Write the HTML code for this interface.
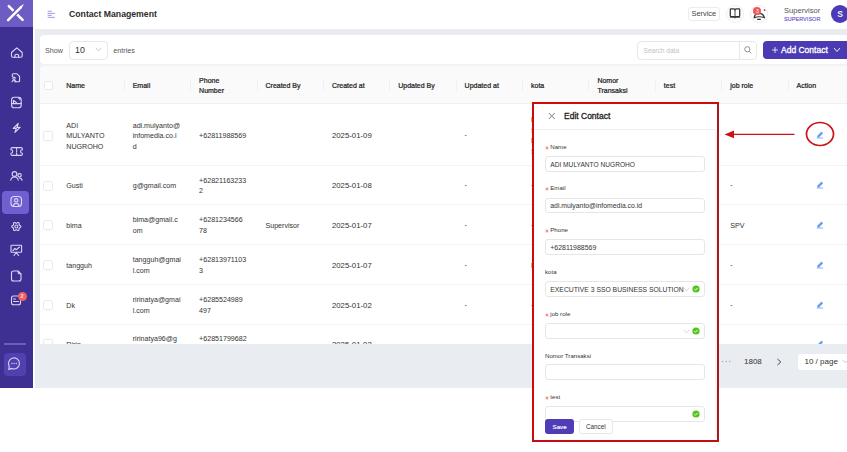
<!DOCTYPE html>
<html><head><meta charset="utf-8">
<style>
*{margin:0;padding:0;box-sizing:border-box}
html,body{width:847px;height:452px;overflow:hidden;background:#fff;font-family:"Liberation Sans",sans-serif;color:#333}
.a{position:absolute}
#side{left:0;top:0;width:33px;height:388px;background:#3e2f93}
#logo{left:0;top:0;width:33px;height:27px;background:#6c5cc4}
#hdr{left:33px;top:0;width:814px;height:29px;background:#fff}
#main{left:34.5px;top:29px;width:812.5px;height:358.6px;background:#e9ecf1}
#showcard{left:40px;top:35px;width:820px;height:29px;background:#fff;border-radius:4px}
#tcard{left:40px;top:66px;width:820px;height:278px;background:#fff;border-radius:4px 4px 0 0;overflow:hidden}
#thead{left:0;top:0;width:820px;height:38px;background:#fafafa;border-bottom:1px solid #f0f0f0}
.th{position:absolute;font-size:7px;color:#222;-webkit-text-stroke:0.22px #222;line-height:10.2px;white-space:nowrap}
.td{position:absolute;font-size:7.1px;color:#333;line-height:10.5px;white-space:nowrap}
.dt{font-size:7.8px}
.sep{position:absolute;top:13.5px;width:1px;height:11px;background:#f0f0f0}
.rowline{position:absolute;left:0;width:820px;height:1px;background:#f3f3f3}
.cb{position:absolute;width:9px;height:9px;border:1px solid #e9e9e9;border-radius:2px;background:#fff}
.edit{position:absolute;width:8px;height:8px}
</style></head><body>
<div class="a" id="side"></div>

<svg class="a" style="left:0;top:0" width="33" height="388" viewBox="0 0 33 388" fill="none" stroke="#dcd5f6" stroke-width="1.1" stroke-linecap="round" stroke-linejoin="round">
 <!-- home -->
 <path d="M11.5 52.5 L16.8 47.8 L22.2 52.5 V56 Q22.2 57.2 21 57.2 H12.7 Q11.5 57.2 11.5 56 Z"/>
 <path d="M15 57.2 V55 Q16.8 53.4 18.6 55 V57.2"/>
 <!-- doc -->
 <path d="M14.5 81.8 H18.6 Q19.6 81.8 19.6 80.8 V76.3 L17 73.8 H13.2 Q12.3 73.8 12.3 74.8 V76.5"/>
 <circle cx="14" cy="78.3" r="1.2"/>
 <path d="M12 81.8 Q12.3 80.2 14 80.2 Q15.7 80.2 16 81.8"/>
 <!-- doc2 -->
 <rect x="11.6" y="97.3" width="9.6" height="10.5" rx="2.6"/>
 <path d="M11.8 103.6 H21"/>
 <path d="M13.5 103.4 V100.5 L15.5 101.8 L17 103.4"/>
 <path d="M18.6 98 L20 99.4"/>
 <!-- lightning -->
 <path d="M18.3 123.4 L13.2 128.4 L16.4 128.1 L14.9 132.4 L20.2 127.2 L17 127.5 Z"/>
 <!-- ticket -->
 <path d="M12.3 147.6 H21 Q22.4 147.6 22.4 149 V149.7 A1.8 1.8 0 0 0 22.4 153.3 V154 Q22.4 155.4 21 155.4 H12.3 Q10.9 155.4 10.9 154 V153.3 A1.8 1.8 0 0 0 10.9 149.7 V149 Q10.9 147.6 12.3 147.6 Z"/>
 <path d="M16.65 148.6 V149.8 M16.65 150.9 V152.1 M16.65 153.2 V154.4"/>
 <!-- users -->
 <circle cx="14.5" cy="174" r="2.4"/>
 <path d="M10.8 180.3 Q11.2 177 14.5 177 Q17.8 177 18.2 180.3"/>
 <circle cx="19.6" cy="175.3" r="1.7"/>
 <path d="M19.3 178 Q21.8 178 22 180.3"/>
</svg>


<div class="a" style="left:2px;top:191px;width:26.5px;height:22.5px;background:#6f5fd0;border-radius:4px"></div>
<div class="a" style="left:3.5px;top:353px;width:22px;height:23px;background:#5041b0;border-radius:4px"></div>
<div class="a" style="left:3.5px;top:343px;width:22.5px;height:1.5px;background:#6c5db8"></div>
<svg class="a" style="left:0;top:0" width="33" height="388" viewBox="0 0 33 388" fill="none" stroke="#dcd5f6" stroke-width="1.1" stroke-linecap="round" stroke-linejoin="round">
 <!-- contact active -->
 <rect x="11" y="196.5" width="10.5" height="10" rx="3"/>
 <circle cx="16.2" cy="200.3" r="1.7"/>
 <path d="M13.3 206.3 Q13.8 203.3 16.2 203.3 Q18.6 203.3 19.1 206.3"/>
 <!-- hex gear -->
 <path d="M20.85 226.50 L20.75 226.89 L20.46 227.23 L20.07 227.51 L19.66 227.72 L19.32 227.91 L19.11 228.12 L19.03 228.41 L19.04 228.80 L19.06 229.26 L19.02 229.74 L18.86 230.16 L18.58 230.44 L18.19 230.54 L17.75 230.47 L17.31 230.27 L16.92 230.02 L16.59 229.82 L16.30 229.75 L16.01 229.82 L15.68 230.02 L15.29 230.27 L14.85 230.47 L14.41 230.54 L14.03 230.44 L13.74 230.16 L13.58 229.74 L13.54 229.26 L13.56 228.80 L13.57 228.41 L13.49 228.12 L13.28 227.91 L12.94 227.72 L12.53 227.51 L12.14 227.23 L11.85 226.89 L11.75 226.50 L11.85 226.11 L12.14 225.77 L12.53 225.49 L12.94 225.28 L13.28 225.09 L13.49 224.88 L13.57 224.59 L13.56 224.20 L13.54 223.74 L13.58 223.26 L13.74 222.84 L14.02 222.56 L14.41 222.46 L14.85 222.53 L15.29 222.73 L15.68 222.98 L16.01 223.18 L16.30 223.25 L16.59 223.18 L16.92 222.98 L17.31 222.73 L17.75 222.53 L18.19 222.46 L18.57 222.56 L18.86 222.84 L19.02 223.26 L19.06 223.74 L19.04 224.20 L19.03 224.59 L19.11 224.88 L19.32 225.09 L19.66 225.28 L20.07 225.49 L20.46 225.77 L20.75 226.11 Z"/>
 <circle cx="16.3" cy="226.5" r="1.5"/>
 <!-- presentation -->
 <rect x="11" y="245.3" width="10.6" height="7" rx="0.5"/>
 <path d="M13 250.5 L15 248.5 L16.5 249.7 L19.5 247"/>
 <path d="M14 255.5 L16.3 252.5 L18.6 255.5"/>
 <!-- file -->
 <path d="M13.5 271 H18 L21 274 V279 Q21 281 19 281 H13.5 Q11.5 281 11.5 279 V273 Q11.5 271 13.5 271 Z"/>
 <path d="M18.2 271.3 V272.8 Q18.2 273.8 19.2 273.8 H20.7"/>
 <!-- chat badge icon -->
 <rect x="11.5" y="296" width="9" height="8.8" rx="2"/>
 <path d="M13.5 299 H15.5 M13.5 301.5 H18.5"/>
 <!-- bottom chat -->
 <path d="M9.24 366.15 A5.5 5.5 0 1 1 11.68 368.38 L8.8 369.6 Z"/>
</svg>
<div class="a" style="left:17.6px;top:291.6px;width:9px;height:9px;border-radius:50%;background:#ee6262;color:#ffd9d9;font-size:5.5px;line-height:9px;text-align:center;font-weight:bold">2</div>
<svg class="a" style="left:0;top:355px" width="33" height="20" viewBox="0 355 33 20"><g fill="#dcd5f6"><circle cx="11.9" cy="363.5" r="0.65"/><circle cx="14.1" cy="363.5" r="0.65"/><circle cx="16.3" cy="363.5" r="0.65"/></g></svg>

<div class="a" id="logo">
<svg class="a" style="left:0;top:0" width="33" height="27" viewBox="0 0 33 27"><path d="M8.8 6.2 L22.6 19.9" stroke="#fff" stroke-width="2.5" stroke-linecap="round"/><path d="M8.2 19.9 L22.5 5.5" stroke="#6c5cc4" stroke-width="5.2"/><path d="M8.1 20.1 L20.6 7.6" stroke="#fff" stroke-width="2.5" stroke-linecap="round"/><path d="M19.6 6.7 L21.5 8.6 L23.9 4.1 Z" fill="#fff"/></svg>
</div>
<div class="a" id="hdr">
 <svg class="a" style="left:14px;top:10px" width="10" height="9" viewBox="0 0 10 9"><g stroke="#b3a6ec" stroke-width="1.15"><path d="M0.6 1.3H4.9"/><path d="M0.6 3.4H7.9"/><path d="M0.6 5.4H4.9"/><path d="M0.6 7.4H7.9"/></g></svg>
 <div class="a" style="left:36px;top:8.5px;font-size:8.7px;font-weight:bold;color:#2b2b2b;line-height:10px">Contact Management</div>
</div>
<div class="a" style="left:687.5px;top:7px;width:32.5px;height:13.5px;border:1px solid #ececec;border-radius:3px;background:#fff"></div>
<div class="a" style="left:691.5px;top:10px;font-size:7.4px;line-height:8px;color:#444">Service</div>
<div class="a" style="left:726px;top:5px;width:18px;height:18px;border:1px solid #efefef;border-radius:50%"></div>
<svg class="a" style="left:726px;top:5px" width="18" height="18" viewBox="0 0 18 18" fill="none" stroke="#333" stroke-width="1.25" stroke-linejoin="round">
 <path d="M4.3 4.6 Q4.3 3.8 5.1 3.8 H7.9 Q9 3.8 9 5 Q9 3.8 10.1 3.8 H12.9 Q13.7 3.8 13.7 4.6 V10.8 Q13.7 11.5 12.9 11.5 H10.1 Q9 11.5 9 12.3 Q9 11.5 7.9 11.5 H5.1 Q4.3 11.5 4.3 10.8 Z"/><path d="M9 5 V12" stroke-width="0.9"/><path d="M3.8 12.3 H14.2" stroke-width="0.8"/><path d="M9 12.3 V13.4" stroke-width="0.9"/>
</svg>
<div class="a" style="left:749.5px;top:5px;width:18px;height:18px;border:1px solid #efefef;border-radius:50%"></div>
<svg class="a" style="left:749.5px;top:5px" width="18" height="18" viewBox="0 0 18 18" fill="none" stroke="#333" stroke-width="1.2" stroke-linecap="round">
 <path d="M4.2 12.6 Q4.6 8.6 8.8 8.3 Q13.4 8.3 14.4 12.6 Q9.3 10.9 4.2 12.6 Z"/><path d="M7.6 14.3 H10.4"/><path d="M14.3 4.9 L14.8 5.4"/>
</svg>
<div class="a" style="left:753.3px;top:7.1px;width:8.2px;height:8.2px;border-radius:50%;background:#f05858;color:#fff;font-size:5px;line-height:8.2px;text-align:center">3</div>
<div class="a" style="left:784px;top:6.8px;font-size:7.6px;line-height:8px;color:#555">Supervisor</div>
<div class="a" style="left:784px;top:16.2px;font-size:5.4px;line-height:6px;color:#7566d4;-webkit-text-stroke:0.2px #7566d4;letter-spacing:0.12px">SUPERVISOR</div>
<div class="a" style="left:831px;top:4.7px;width:18px;height:18px;border-radius:50%;background:#4b3bb8;color:#eee;font-size:8.5px;line-height:18px;text-align:center;font-weight:bold">S</div>

<div class="a" id="main"></div>
<div class="a" id="showcard">
 <div class="a" style="left:5px;top:12.2px;font-size:7.2px;line-height:8px;color:#555">Show</div>
 <div class="a" style="left:28.5px;top:6px;width:39.5px;height:18.5px;border:1px solid #e8e8e8;border-radius:4px"></div>
 <div class="a" style="left:35px;top:9.5px;font-size:8.8px;line-height:10px;color:#333">10</div>
 <svg class="a" style="left:55px;top:12.2px" width="7" height="5" viewBox="0 0 7 5"><path d="M0.6 0.8 L3.5 3.9 L6.4 0.8" fill="none" stroke="#bbb" stroke-width="0.8"/></svg>
 <div class="a" style="left:73.3px;top:12.2px;font-size:7.2px;line-height:8px;color:#555">entries</div>
</div>
<div class="a" style="left:636.5px;top:41px;width:120px;height:18.5px;border:1px solid #e8e8e8;border-radius:4px;background:#fff"></div>
<div class="a" style="left:738.5px;top:41px;width:1px;height:18.5px;background:#e8e8e8"></div>
<div class="a" style="left:643.5px;top:46.5px;font-size:6.6px;line-height:8px;color:#c2c2c2">Search data</div>
<svg class="a" style="left:743px;top:45px" width="10" height="10" viewBox="0 0 10 10" fill="none" stroke="#888" stroke-width="0.9"><circle cx="4.3" cy="4.3" r="2.6"/><path d="M6.3 6.3 L8.3 8.3"/></svg>
<div class="a" style="left:762.5px;top:41px;width:90px;height:18px;border-radius:4px;background:#4a3ab3"></div>
<svg class="a" style="left:771px;top:46px" width="8" height="8" viewBox="0 0 8 8" stroke="#fff" stroke-width="0.8"><path d="M4 1 V7 M1 4 H7"/></svg>
<div class="a" style="left:781px;top:46.3px;font-size:8.5px;line-height:9px;color:#fff;-webkit-text-stroke:0.3px #fff">Add Contact</div>
<svg class="a" style="left:833px;top:46.5px" width="8" height="6" viewBox="0 0 8 6"><path d="M1 1 L4 4.5 L7 1" fill="none" stroke="#fff" stroke-width="0.9"/></svg>

<div class="a" style="left:40px;top:64px;width:807px;height:2px;background:#f0f2f5"></div>
<div class="a" id="tcard">
<div class="a" id="thead"></div>
<div class="cb" style="left:4.0px;top:15.0px"></div>
<div class="th" style="left:26.3px;top:14.5px">Name</div>
<div class="th" style="left:92.7px;top:14.5px">Email</div>
<div class="sep" style="left:83.7px"></div>
<div class="th" style="left:159.1px;top:9.5px">Phone<br>Number</div>
<div class="sep" style="left:150.1px"></div>
<div class="th" style="left:225.5px;top:14.5px">Created By</div>
<div class="sep" style="left:216.5px"></div>
<div class="th" style="left:291.9px;top:14.5px">Created at</div>
<div class="sep" style="left:282.9px"></div>
<div class="th" style="left:358.2px;top:14.5px">Updated By</div>
<div class="sep" style="left:349.2px"></div>
<div class="th" style="left:424.6px;top:14.5px">Updated at</div>
<div class="sep" style="left:415.6px"></div>
<div class="th" style="left:491.0px;top:14.5px">kota</div>
<div class="sep" style="left:482.0px"></div>
<div class="th" style="left:557.4px;top:9.5px">Nomor<br>Transaksi</div>
<div class="sep" style="left:548.4px"></div>
<div class="th" style="left:623.8px;top:14.5px">test</div>
<div class="sep" style="left:614.8px"></div>
<div class="th" style="left:690.2px;top:14.5px">job role</div>
<div class="sep" style="left:681.2px"></div>
<div class="th" style="left:756.6px;top:14.5px">Action</div>
<div class="sep" style="left:747.6px"></div>
<div class="rowline" style="top:99.0px"></div>
<div class="cb" style="left:3.3px;top:64.9px;width:10px;height:10px;border-radius:2.5px"></div>
<div class="td" style="left:26.3px;top:54.55px">ADI<br>MULYANTO<br>NUGROHO</div>
<div class="td" style="left:92.7px;top:54.55px">adi.mulyanto@<br>infomedia.co.i<br>d</div>
<div class="td" style="left:159.1px;top:65.05px">+62811988569</div>
<div class="td dt" style="left:291.9px;top:65.05px">2025-01-09</div>
<div class="td" style="left:424.6px;top:64.05px">-</div>
<div class="td" style="left:491.0px;top:49.30px">EXECUTIVE 3<br>SSO<br>BUSINESS<br>SOLUTION</div>
<svg class="edit" style="left:776.0px;top:65.0px" width="9" height="9" viewBox="0 0 9 9"><path d="M1.2 7.4 L1.5 5.3 L5.6 1.2 Q6.3 0.7 7 1.3 L7.6 2 Q8 2.6 7.5 3.2 L3.4 7.4 Z" fill="#6a9ef0"/><path d="M0.9 7.9 H8" stroke="#6a9ef0" stroke-width="0.9"/></svg>
<div class="rowline" style="top:138.0px"></div>
<div class="cb" style="left:3.3px;top:114.9px;width:10px;height:10px;border-radius:2.5px"></div>
<div class="td" style="left:26.3px;top:115.05px">Gusti</div>
<div class="td" style="left:92.7px;top:115.05px">g@gmail.com</div>
<div class="td" style="left:159.1px;top:109.80px">+62821163233<br>2</div>
<div class="td dt" style="left:291.9px;top:115.05px">2025-01-08</div>
<div class="td" style="left:424.6px;top:114.05px">-</div>
<div class="td" style="left:491.0px;top:114.05px">-</div>
<div class="td" style="left:690.2px;top:114.05px">-</div>
<svg class="edit" style="left:776.0px;top:115.0px" width="9" height="9" viewBox="0 0 9 9"><path d="M1.2 7.4 L1.5 5.3 L5.6 1.2 Q6.3 0.7 7 1.3 L7.6 2 Q8 2.6 7.5 3.2 L3.4 7.4 Z" fill="#6a9ef0"/><path d="M0.9 7.9 H8" stroke="#6a9ef0" stroke-width="0.9"/></svg>
<div class="rowline" style="top:178.0px"></div>
<div class="cb" style="left:3.3px;top:154.4px;width:10px;height:10px;border-radius:2.5px"></div>
<div class="td" style="left:26.3px;top:154.55px">bima</div>
<div class="td" style="left:92.7px;top:149.30px">bima@gmail.c<br>om</div>
<div class="td" style="left:159.1px;top:149.30px">+6281234566<br>78</div>
<div class="td" style="left:225.5px;top:154.55px">Supervisor</div>
<div class="td dt" style="left:291.9px;top:154.55px">2025-01-07</div>
<div class="td" style="left:424.6px;top:153.55px">-</div>
<div class="td" style="left:491.0px;top:153.55px">-</div>
<div class="td" style="left:690.2px;top:154.55px">SPV</div>
<svg class="edit" style="left:776.0px;top:154.5px" width="9" height="9" viewBox="0 0 9 9"><path d="M1.2 7.4 L1.5 5.3 L5.6 1.2 Q6.3 0.7 7 1.3 L7.6 2 Q8 2.6 7.5 3.2 L3.4 7.4 Z" fill="#6a9ef0"/><path d="M0.9 7.9 H8" stroke="#6a9ef0" stroke-width="0.9"/></svg>
<div class="rowline" style="top:218.0px"></div>
<div class="cb" style="left:3.3px;top:194.4px;width:10px;height:10px;border-radius:2.5px"></div>
<div class="td" style="left:26.3px;top:194.55px">tangguh</div>
<div class="td" style="left:92.7px;top:189.30px">tangguh@gmai<br>l.com</div>
<div class="td" style="left:159.1px;top:189.30px">+62813971103<br>3</div>
<div class="td dt" style="left:291.9px;top:194.55px">2025-01-07</div>
<div class="td" style="left:424.6px;top:193.55px">-</div>
<div class="td" style="left:491.0px;top:194.55px">EXECUTIVE</div>
<div class="td" style="left:690.2px;top:193.55px">-</div>
<svg class="edit" style="left:776.0px;top:194.5px" width="9" height="9" viewBox="0 0 9 9"><path d="M1.2 7.4 L1.5 5.3 L5.6 1.2 Q6.3 0.7 7 1.3 L7.6 2 Q8 2.6 7.5 3.2 L3.4 7.4 Z" fill="#6a9ef0"/><path d="M0.9 7.9 H8" stroke="#6a9ef0" stroke-width="0.9"/></svg>
<div class="rowline" style="top:258.0px"></div>
<div class="cb" style="left:3.3px;top:234.4px;width:10px;height:10px;border-radius:2.5px"></div>
<div class="td" style="left:26.3px;top:234.55px">Dk</div>
<div class="td" style="left:92.7px;top:229.30px">ririnatya@gmai<br>l.com</div>
<div class="td" style="left:159.1px;top:229.30px">+6285524989<br>497</div>
<div class="td dt" style="left:291.9px;top:234.55px">2025-01-02</div>
<div class="td" style="left:424.6px;top:233.55px">-</div>
<div class="td" style="left:491.0px;top:233.55px">-</div>
<div class="td" style="left:690.2px;top:233.55px">-</div>
<svg class="edit" style="left:776.0px;top:234.5px" width="9" height="9" viewBox="0 0 9 9"><path d="M1.2 7.4 L1.5 5.3 L5.6 1.2 Q6.3 0.7 7 1.3 L7.6 2 Q8 2.6 7.5 3.2 L3.4 7.4 Z" fill="#6a9ef0"/><path d="M0.9 7.9 H8" stroke="#6a9ef0" stroke-width="0.9"/></svg>
<div class="rowline" style="top:297.0px"></div>
<div class="cb" style="left:3.3px;top:273.4px;width:10px;height:10px;border-radius:2.5px"></div>
<div class="td" style="left:26.3px;top:273.55px">Ririn</div>
<div class="td" style="left:92.7px;top:268.30px">ririnatya96@g<br>mail.com</div>
<div class="td" style="left:159.1px;top:268.30px">+62851799682<br>0</div>
<div class="td dt" style="left:291.9px;top:273.55px">2025-01-02</div>
<div class="td" style="left:424.6px;top:272.55px">-</div>
<div class="td" style="left:491.0px;top:272.55px">-</div>
<div class="td" style="left:690.2px;top:272.55px">-</div>
<svg class="edit" style="left:776.0px;top:273.5px" width="9" height="9" viewBox="0 0 9 9"><path d="M1.2 7.4 L1.5 5.3 L5.6 1.2 Q6.3 0.7 7 1.3 L7.6 2 Q8 2.6 7.5 3.2 L3.4 7.4 Z" fill="#6a9ef0"/><path d="M0.9 7.9 H8" stroke="#6a9ef0" stroke-width="0.9"/></svg>
</div>
<svg class="a" style="left:720px;top:359px" width="14" height="5" viewBox="0 0 14 5" fill="#a8a8a8"><circle cx="2.6" cy="2.6" r="0.75"/><circle cx="6.2" cy="2.6" r="0.75"/><circle cx="9.8" cy="2.6" r="0.75"/></svg>
<div class="a" style="left:744px;top:357px;font-size:8px;line-height:9px;color:#333">1808</div>
<svg class="a" style="left:775px;top:358px" width="8" height="8" viewBox="0 0 8 8"><path d="M2.5 1 L5.8 4 L2.5 7" fill="none" stroke="#333" stroke-width="0.9"/></svg>
<div class="a" style="left:798px;top:353.5px;width:60px;height:16.5px;border-radius:3px;background:#fff"></div>
<div class="a" style="left:804.5px;top:357px;font-size:8px;line-height:9px;color:#333">10 / page</div>
<svg class="a" style="left:842px;top:359px" width="7" height="5" viewBox="0 0 7 5"><path d="M0.8 1 L3.5 3.8 L6.2 1" fill="none" stroke="#bbb" stroke-width="0.8"/></svg>

<svg class="a" style="left:0;top:0" width="847" height="452" viewBox="0 0 847 452">
 <ellipse cx="820" cy="134" rx="13.5" ry="11.5" fill="none" stroke="#cc1219" stroke-width="1.7"/>
 <path d="M733 134.4 H794.5" stroke="#cc1219" stroke-width="1.1"/>
 <path d="M724.5 134.4 L734 130.6 L734 138.2 Z" fill="#cc1219"/>
</svg>

<div class="a" style="left:532px;top:102px;width:187px;height:339.5px;border-style:solid;border-width:2px 2.6px 2.6px 2px;border-color:#d00a0a #a8171c #c10d14 #d00a0a;background:#fff"></div>
<svg class="a" style="left:548px;top:112.3px" width="8" height="8" viewBox="0 0 8 8" stroke="#8c8c8c" stroke-width="1.05"><path d="M0.8 1 L6.8 7 M6.8 1 L0.8 7"/></svg>
<div class="a" style="left:564px;top:110.8px;font-size:8.5px;line-height:10px;color:#222;-webkit-text-stroke:0.3px #222">Edit Contact</div>
<div class="a" style="left:534px;top:128.5px;width:181.5px;height:1px;background:#f0f0f0"></div>
<div class="a" style="left:715px;top:129.5px;width:1.5px;height:309px;background:#f4f4f4"></div>

<svg class="a" style="left:544.6px;top:146.1px" width="4" height="4" viewBox="0 0 4 4" stroke="#f07070" stroke-width="0.75"><path d="M2 0.4 V3.6 M0.6 1.2 L3.4 2.8 M0.6 2.8 L3.4 1.2"/></svg>
<div class="a" style="left:550.3px;top:143.3px;font-size:6.1px;line-height:7px;color:#333">Name</div>
<div class="a" style="left:545px;top:156.0px;width:159.5px;height:15.5px;border:1px solid #e6e6e6;border-radius:3px;background:#fff"></div>
<div class="a" style="left:550.3px;top:160.7px;width:150px;overflow:hidden;white-space:nowrap;font-size:6.6px;line-height:8px;color:#333">ADI MULYANTO NUGROHO</div>
<svg class="a" style="left:544.6px;top:187.0px" width="4" height="4" viewBox="0 0 4 4" stroke="#f07070" stroke-width="0.75"><path d="M2 0.4 V3.6 M0.6 1.2 L3.4 2.8 M0.6 2.8 L3.4 1.2"/></svg>
<div class="a" style="left:550.3px;top:184.2px;font-size:6.1px;line-height:7px;color:#333">Email</div>
<div class="a" style="left:545px;top:197.7px;width:159.5px;height:15.5px;border:1px solid #e6e6e6;border-radius:3px;background:#fff"></div>
<div class="a" style="left:550.3px;top:202.4px;width:150px;overflow:hidden;white-space:nowrap;font-size:6.85px;line-height:8px;color:#333">adi.mulyanto@infomedia.co.id</div>
<svg class="a" style="left:544.6px;top:229.0px" width="4" height="4" viewBox="0 0 4 4" stroke="#f07070" stroke-width="0.75"><path d="M2 0.4 V3.6 M0.6 1.2 L3.4 2.8 M0.6 2.8 L3.4 1.2"/></svg>
<div class="a" style="left:550.3px;top:226.2px;font-size:6.1px;line-height:7px;color:#333">Phone</div>
<div class="a" style="left:545px;top:239.4px;width:159.5px;height:15.5px;border:1px solid #e6e6e6;border-radius:3px;background:#fff"></div>
<div class="a" style="left:550.3px;top:244.1px;width:150px;overflow:hidden;white-space:nowrap;font-size:6.95px;line-height:8px;color:#333">+62811988569</div>
<div class="a" style="left:545.0px;top:268.2px;font-size:6.1px;line-height:7px;color:#333">kota</div>
<div class="a" style="left:545px;top:281.3px;width:159.5px;height:15.5px;border:1px solid #e6e6e6;border-radius:3px;background:#fff"></div>
<div class="a" style="left:550.3px;top:286.0px;width:136px;overflow:hidden;white-space:nowrap;font-size:6.8px;line-height:8px;color:#333">EXECUTIVE 3 SSO BUSINESS SOLUTION</div>
<svg class="a" style="left:682.5px;top:286.8px" width="7" height="5" viewBox="0 0 7 5"><path d="M0.8 1 L3.5 3.8 L6.2 1" fill="none" stroke="#c4c4c4" stroke-width="0.7"/></svg>
<svg class="a" style="left:691.5px;top:284.8px" width="8" height="8" viewBox="0 0 8 8"><circle cx="4" cy="4" r="3.6" fill="#52c41a"/><path d="M2.3 4.1 L3.5 5.2 L5.7 2.9" fill="none" stroke="#fff" stroke-width="0.9"/></svg>
<svg class="a" style="left:544.6px;top:313.0px" width="4" height="4" viewBox="0 0 4 4" stroke="#f07070" stroke-width="0.75"><path d="M2 0.4 V3.6 M0.6 1.2 L3.4 2.8 M0.6 2.8 L3.4 1.2"/></svg>
<div class="a" style="left:550.3px;top:310.2px;font-size:6.1px;line-height:7px;color:#333">job role</div>
<div class="a" style="left:545px;top:323.0px;width:159.5px;height:15.5px;border:1px solid #e6e6e6;border-radius:3px;background:#fff"></div>
<svg class="a" style="left:682.5px;top:328.5px" width="7" height="5" viewBox="0 0 7 5"><path d="M0.8 1 L3.5 3.8 L6.2 1" fill="none" stroke="#c4c4c4" stroke-width="0.7"/></svg>
<svg class="a" style="left:691.5px;top:326.5px" width="8" height="8" viewBox="0 0 8 8"><circle cx="4" cy="4" r="3.6" fill="#52c41a"/><path d="M2.3 4.1 L3.5 5.2 L5.7 2.9" fill="none" stroke="#fff" stroke-width="0.9"/></svg>
<div class="a" style="left:545.0px;top:351.9px;font-size:6.1px;line-height:7px;color:#333">Nomor Transaksi</div>
<div class="a" style="left:545px;top:364.3px;width:159.5px;height:15.5px;border:1px solid #e6e6e6;border-radius:3px;background:#fff"></div>
<svg class="a" style="left:544.6px;top:395.7px" width="4" height="4" viewBox="0 0 4 4" stroke="#f07070" stroke-width="0.75"><path d="M2 0.4 V3.6 M0.6 1.2 L3.4 2.8 M0.6 2.8 L3.4 1.2"/></svg>
<div class="a" style="left:550.3px;top:392.9px;font-size:6.1px;line-height:7px;color:#333">test</div>
<div class="a" style="left:545px;top:406.3px;width:159.5px;height:15.5px;border:1px solid #e6e6e6;border-radius:3px;background:#fff"></div>
<svg class="a" style="left:691.5px;top:409.8px" width="8" height="8" viewBox="0 0 8 8"><circle cx="4" cy="4" r="3.6" fill="#52c41a"/><path d="M2.3 4.1 L3.5 5.2 L5.7 2.9" fill="none" stroke="#fff" stroke-width="0.9"/></svg>
<div class="a" style="left:545px;top:419.2px;width:28.7px;height:14.8px;border-radius:3px;background:#4f3db8"></div>
<div class="a" style="left:552.5px;top:423px;font-size:6.2px;line-height:7px;color:#fff;-webkit-text-stroke:0.15px #fff">Save</div>
<div class="a" style="left:578.8px;top:419.3px;width:34px;height:14.7px;border:1px solid #e8e8e8;border-radius:3px;background:#fff"></div>
<div class="a" style="left:586px;top:423px;font-size:6.3px;line-height:7px;color:#333">Cancel</div>

</body></html>
